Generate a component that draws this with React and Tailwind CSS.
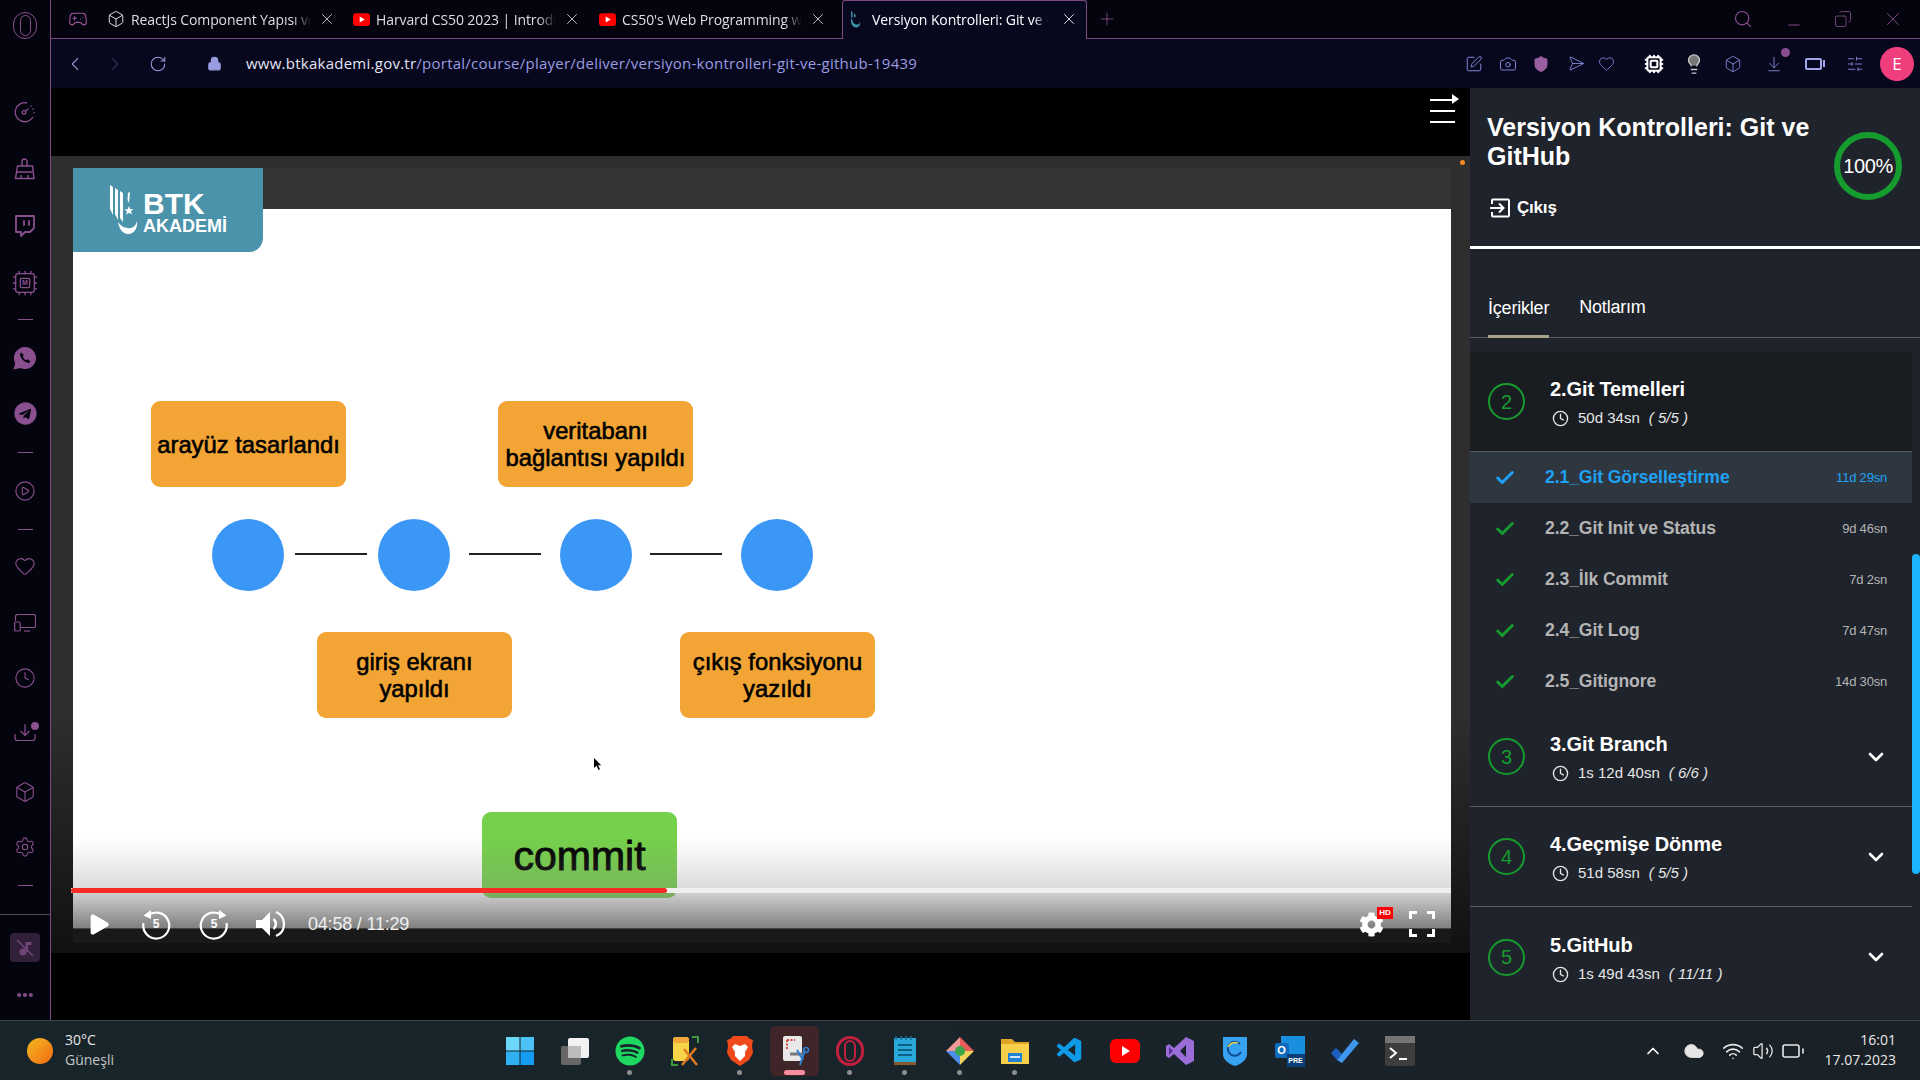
import { ChevronLeft, ChevronRight, RotateCw, Lock, X, Plus, Search, Minus, Copy, Camera, Send, Heart, Box, ArrowDownToLine, SlidersHorizontal, Lightbulb, Gamepad2, Twitch, CirclePlay, Clock, Settings, Check, ChevronDown, ChevronUp, Volume2, Wifi, Cloud, Battery, Play, Cpu, Shield, SquarePen, Ellipsis } from 'lucide-react';
import { FaTelegram, FaSpotify, FaCog } from 'react-icons/fa';
import { VscVscode } from 'react-icons/vsc';

const tabs = [
  { title: 'ReactJs Component Yapısı ve Kullanımı', icon: 'box' },
  { title: 'Harvard CS50 2023 | Introduction', icon: 'yt' },
  { title: "CS50's Web Programming with Python", icon: 'yt' },
];

const lessons = [
  { name: '2.1_Git Görselleştirme', time: '11d 29sn', active: true },
  { name: '2.2_Git Init ve Status', time: '9d 46sn' },
  { name: '2.3_İlk Commit', time: '7d 2sn' },
  { name: '2.4_Git Log', time: '7d 47sn' },
  { name: '2.5_Gitignore', time: '14d 30sn' },
];

function YtIcon({ size = 17 }) {
  return (
    <svg width={size} height={size} viewBox="0 0 16 16" className="shrink-0">
      <rect x="0" y="2" width="16" height="12" rx="3" fill="#f00" />
      <path d="M6.3 5.2 11 8l-4.7 2.800z" fill="#fff" />
    </svg>
  );
}

function Tab({ title, icon }) {
  return (
    <div className="w-[246px] h-full flex items-center pl-[3px] text-[#dedee2]">
      {icon === 'yt' ? <YtIcon /> : <Box size={18} className="shrink-0" strokeWidth={1.3} />}
      <span className="ml-[6px] w-[180px] overflow-hidden whitespace-nowrap text-[14px] tracking-[-0.1px] [mask-image:linear-gradient(to_right,black_90%,transparent)]">{title}</span>
      <X size={18} strokeWidth={1.1} className="ml-[7px] shrink-0" />
    </div>
  );
}

function RailIcon({ children, h, dot }) {
  return (
    <div className={`relative w-full flex items-center justify-center text-[#8a4f8e] ${h}`}>
      {children}
      {dot && <span className="absolute left-[31px] top-[10px] w-2 h-2 rounded-full bg-[#8a4f8e]"></span>}
    </div>
  );
}

function Rail() {
  const s = 22;
  return (
    <aside className="w-[51px] shrink-0 h-full flex flex-col items-center bg-[#04040f] border-r border-[#7b4a80]">
      <div className="h-[38px] w-full flex items-center justify-center pt-3">
        <div className="w-[24px] h-[27px] rounded-full border-[1.5px] border-[#8a4f8e] flex items-center justify-center">
          <div className="w-[11px] h-[21px] rounded-full border border-[#8a4f8e]"></div>
        </div>
      </div>
      <div className="h-[46px]"></div>
      <RailIcon h="h-[56px]">
        <svg width="22" height="22" viewBox="0 0 22 22" fill="none" stroke="currentColor" strokeWidth="1.3">
          <path d="M19 16A9.500 9.500 0 1 1 13 2" />
          <circle cx="10" cy="11.500" r="1.800" />
          <path d="m11.500 10.200 3-2.600" />
          <path d="M17 5v.1M19 8v.1M20 11.500v.1" strokeLinecap="round" strokeWidth="1.600" />
        </svg>
      </RailIcon>
      <RailIcon h="h-[58px]">
        <svg width="22" height="22" viewBox="0 0 22 22" fill="none" stroke="currentColor" strokeWidth="1.400">
          <path d="M8 8V3.500a2.500 2.500 0 0 1 5 0V8M3.500 8h15l1.500 12.500H1.500z" />
          <path d="M3 14h15.500M7 20.500V17M14 20.500V17" />
        </svg>
      </RailIcon>
      <RailIcon h="h-[56px]"><Twitch size={24} strokeWidth={1.8} /></RailIcon>
      <RailIcon h="h-[58px]">
        <div className="relative flex items-center justify-center">
          <Cpu size={28} strokeWidth={1.1} />
          <span className="absolute text-[7px] font-bold font-['Liberation_Sans',sans-serif]">M</span>
        </div>
      </RailIcon>
      <div className="w-[15px] h-px bg-[#8a4f8e] mt-[7px] shrink-0"></div>
      <RailIcon h="h-[76px]">
        <svg width="24" height="24" viewBox="0 0 24 24">
          <path d="M12 1a11 11 0 0 1 0 22 11 11 0 0 1-4.800-1.100L.500 23.500l1.700-6.300A11 11 0 0 1 12 1z" fill="currentColor" />
          <path d="M8.500 6.500 7 8c-.5 3 4.500 9 9 9l1.500-1.800-3-1.900-1.200 1c-1.500-.5-3-2.300-3.500-3.800l1-1.200z" fill="#04040f" />
        </svg>
      </RailIcon>
      <RailIcon h="h-[34px]"><FaTelegram size={23} /></RailIcon>
      <div className="h-[22px]"></div>
      <div className="w-[15px] h-px bg-[#8a4f8e] shrink-0"></div>
      <RailIcon h="h-[76px]"><CirclePlay size={s} strokeWidth={1.2} /></RailIcon>
      <div className="w-[15px] h-px bg-[#8a4f8e] shrink-0"></div>
      <RailIcon h="h-[72px]"><Heart size={s} strokeWidth={1.2} /></RailIcon>
      <RailIcon h="h-[42px]">
        <svg width="22" height="18" viewBox="0 0 22 18" fill="none" stroke="currentColor" strokeWidth="1.200">
          <path d="M1.500 7V2.500a2 2 0 0 1 2-2H19.500a2 2 0 0 1 2 1.800V12a1.500 1.500 0 0 1-1.500 1.500H7" />
          <rect x="0.700" y="8" width="5.500" height="9" rx="1" />
          <path d="M10 17h6" />
        </svg>
      </RailIcon>
      <RailIcon h="h-[68px]"><Clock size={s} strokeWidth={1.2} /></RailIcon>
      <RailIcon h="h-[38px]" dot>
        <svg width="22" height="22" viewBox="0 0 22 22" fill="none" stroke="currentColor" strokeWidth="1.200">
          <path d="M11 4v11M6.500 11l4.500 4.500 4.500-4.500" />
          <path d="M1 14v4a2.500 2.500 0 0 0 2.500 2.500h15A2.500 2.500 0 0 0 21 18v-4" />
        </svg>
      </RailIcon>
      <RailIcon h="h-[84px]"><Box size={s} strokeWidth={1.2} /></RailIcon>
      <RailIcon h="h-[26px]"><Settings size={s} strokeWidth={1.2} /></RailIcon>
      <div className="h-[25px]"></div>
      <div className="w-[15px] h-px bg-[#8a4f8e] shrink-0"></div>
      <div className="h-[28px]"></div>
      <div className="w-full h-px bg-[#4c4c58] shrink-0"></div>
      <div className="mt-[18px] w-[30px] h-[29px] rounded bg-[#32203a] flex items-center justify-center text-[#6e4576]">
        <svg width="18" height="18" viewBox="0 0 18 18" fill="currentColor">
          <circle cx="7" cy="13" r="3.500" />
          <path d="M9.500 13V3h6v3h-3.500v7z" />
          <path d="M1 1l16 16" stroke="currentColor" strokeWidth="1.600" />
        </svg>
      </div>
      <div className="mt-[23px] text-[#8a4f8e]"><Ellipsis size={20} strokeWidth={3} /></div>
    </aside>
  );
}

function TabBar() {
  return (
    <div className="h-[39px] shrink-0 flex items-stretch bg-[#04040f] border-b border-[#7b4a80] font-['Open_Sans',sans-serif]">
      <div className="w-[53px] flex items-center justify-center text-[#a0599f]"><Gamepad2 size={20} strokeWidth={1.3} /></div>
      <div className="flex h-full">
        {tabs.map((t) => <Tab key={t.title} {...t} />)}
      </div>
      <div className="relative w-[245px] h-[39px] flex items-center pl-[5px] pb-[2px] bg-[#07071e] border-x border-t border-[#7b4a80] rounded-tl-[3px] rounded-tr-[3px] text-white">
        <svg width="14" height="18" viewBox="0 0 14 18" className="shrink-0">
          <path d="M3 1l1.500 1v6L3 7zM6 3.500 7.500 4.500v3L6 7z" fill="#3c93ab" />
          <path d="M4 9c.5 4 3 6 6 5.500a3 3 0 0 0 1.500-4c1.500 3 .5 6.500-3 7C5 17.500 2.500 14 3 9z" fill="#3c93ab" />
        </svg>
        <span className="ml-[10px] w-[176px] overflow-hidden whitespace-nowrap text-[14px] tracking-[-0.1px] [mask-image:linear-gradient(to_right,black_92%,transparent)]">Versiyon Kontrolleri: Git ve GitHub</span>
        <X size={18} strokeWidth={1.1} className="ml-[12px] shrink-0" />
        <span className="absolute left-0 right-0 -bottom-px h-px bg-[#07071e]"></span>
      </div>
      <div className="ml-[10px] flex items-center text-[#8a4f8e]"><Plus size={20} strokeWidth={1} /></div>
      <div className="ml-auto flex items-center text-[#8a4f8e] pr-[16px]">
        <Search size={20} strokeWidth={1.4} />
        <Minus size={18} strokeWidth={1.2} className="ml-[32px] mt-3" />
        <Copy size={18} strokeWidth={1.1} className="ml-[31px] -scale-x-100" />
        <X size={22} strokeWidth={1} className="ml-[30px]" />
      </div>
    </div>
  );
}

function AddressBar() {
  return (
    <div className="h-[49px] shrink-0 flex items-center bg-[#07071e]">
      <ChevronLeft size={22} strokeWidth={1.2} className="ml-[13px] text-[#8e90c8]" />
      <ChevronRight size={22} strokeWidth={1.2} className="ml-[18px] text-[#30305a]" />
      <RotateCw size={18} strokeWidth={1.4} className="ml-[23px] text-[#9a9cd8]" />
      <Lock size={15} strokeWidth={2} fill="#9a9ce0" className="ml-[40px] text-[#9a9ce0]" />
      <div className="ml-[24px] text-[15px] tracking-[0.25px] font-['Open_Sans',sans-serif] text-[#9a9ce0] whitespace-nowrap">
        <span className="text-[#e4e4f4]">www.btkakademi.gov.tr</span>/portal/course/player/deliver/versiyon-kontrolleri-git-ve-github-19439
      </div>
      <div className="ml-auto flex items-center pr-[6px] text-[#8488d8]">
        <SquarePen size={18} strokeWidth={1.3} />
        <Camera size={18} strokeWidth={1.3} className="ml-[16px]" />
        <div className="ml-[15px] text-[#9a5f9e]"><Shield size={18} fill="#9a5f9e" strokeWidth={1.2} /></div>
        <Send size={17} strokeWidth={1.2} className="ml-[15px] rotate-45" />
        <Heart size={17} strokeWidth={1.2} className="ml-[16px]" />
        <Cpu size={20} strokeWidth={2.4} className="ml-[29px] text-white" />
        <Lightbulb size={22} strokeWidth={1.5} fill="#777" className="ml-[19px] text-[#c8c8c8]" />
        <Box size={18} strokeWidth={1.2} className="ml-[19px]" />
        <div className="relative ml-[23px]">
          <ArrowDownToLine size={18} strokeWidth={1.2} />
          <span className="absolute -right-[7px] -top-[7px] w-[9px] h-[9px] rounded-full bg-[#8a4f8e]"></span>
        </div>
        <div className="ml-[22px] w-[20px] h-[12px] flex items-center">
          <div className="w-[17px] h-[12px] rounded-[2px] border-2 border-[#a0a4ea]"></div>
          <div className="ml-px w-[2px] h-[7px] bg-[#a0a4ea]"></div>
        </div>
        <SlidersHorizontal size={18} strokeWidth={1.2} className="ml-[21px]" />
        <div className="ml-[16px] w-[34px] h-[34px] rounded-full bg-[#ef3e7c] text-white text-[17px] font-['Open_Sans',sans-serif] flex items-center justify-center">E</div>
      </div>
    </div>
  );
}

function NoteBox({ className, children }) {
  return (
    <div className={`absolute w-[195px] h-[86px] rounded-[9px] bg-[#f2a535] flex items-center justify-center text-center text-black text-[23.8px] leading-[27px] font-['Liberation_Sans',sans-serif] [-webkit-text-stroke:0.6px_black] ${className}`}>
      {children}
    </div>
  );
}

function Slide() {
  const dots = ['left-[139px]', 'left-[305px]', 'left-[487px]', 'left-[668px]'];
  const lines = ['left-[222px]', 'left-[396px]', 'left-[577px]'];
  return (
    <div className="relative flex-1 bg-white">
      <NoteBox className="left-[78px] top-[192px]">arayüz tasarlandı</NoteBox>
      <NoteBox className="left-[425px] top-[192px]">veritabanı<br />bağlantısı yapıldı</NoteBox>
      <NoteBox className="left-[244px] top-[423px]">giriş ekranı<br />yapıldı</NoteBox>
      <NoteBox className="left-[607px] top-[423px]">çıkış fonksiyonu<br />yazıldı</NoteBox>
      {dots.map((d) => <div key={d} className={`absolute top-[310px] w-[72px] h-[72px] rounded-full bg-[#3b97f5] ${d}`}></div>)}
      {lines.map((l) => <div key={l} className={`absolute top-[344px] w-[72px] h-[2px] bg-[#222] ${l}`}></div>)}
      <svg width="10" height="14" viewBox="0 0 10 14" className="absolute left-[520px] top-[548px]">
        <path d="M1 1v10l2.500-2.200L5.500 13l1.500-.7-2-4h3.200z" fill="#000" />
      </svg>
      <div className="absolute left-[409px] top-[603px] w-[195px] h-[86px] pt-[4px] rounded-[9px] bg-[#75d04b] flex items-center justify-center text-black text-[41px] font-['Liberation_Sans',sans-serif] [-webkit-text-stroke:0.9px_black]">commit</div>
    </div>
  );
}

function Replay({ forward }) {
  return (
    <div className="relative w-[32px] h-[32px] flex items-center justify-center text-white">
      <svg width="32" height="32" viewBox="0 0 32 32" fill="none" stroke="white" strokeWidth="2.200" className={forward ? '-scale-x-100' : ''}>
        <path d="M8 7.500A13 13 0 1 1 3.500 15" />
        <path d="M11 2v9L3.500 7.500z" fill="white" stroke="none" />
      </svg>
      <span className="absolute text-[12px] font-bold font-['Liberation_Sans',sans-serif]">5</span>
    </div>
  );
}

function Controls() {
  return (
    <div className="absolute left-0 right-0 bottom-0 pointer-events-none">
      <div className="h-[90px] bg-[linear-gradient(to_bottom,rgba(128,128,128,0),rgba(128,128,128,0.28)_55%,#808080)]"></div>
      <div className="h-[15px] border-t border-[#444] bg-[#191919]"></div>
      <div className="absolute -left-[2px] right-0 top-[50px] h-[5px] bg-[#eeeeee]">
        <div className="h-full w-[596px] rounded-full bg-[#f52c26]"></div>
      </div>
      <div className="absolute left-0 right-0 top-[68px] h-[36px] flex items-center">
        <Play size={27} fill="white" strokeWidth={0} className="ml-[12px]" />
        <div className="ml-[28px]"><Replay /></div>
        <div className="ml-[26px]"><Replay forward /></div>
        <svg width="30" height="30" viewBox="0 0 30 30" fill="none" stroke="white" className="ml-[25px]">
          <path d="M1 11h6l8-8v24l-8-8H1z" fill="white" stroke="none" />
          <path d="M18.500 10a6.500 6.500 0 0 1 0 10" strokeWidth="2.500" />
          <path d="M21 3a13 13 0 0 1 0 24" strokeWidth="2.200" />
        </svg>
        <span className="ml-[23px] text-[18px] text-[#f0f0f0] font-['Liberation_Sans',sans-serif] tracking-[-0.2px]">04:58 / 11:29</span>
        <div className="relative ml-auto">
          <FaCog size={25} className="text-white" />
          <span className="absolute left-[18px] -top-[5px] w-[16px] h-[12px] bg-[#f00] text-white text-[8px] leading-[12px] text-center font-bold font-['Liberation_Sans',sans-serif]">HD</span>
        </div>
        <svg width="26" height="26" viewBox="0 0 26 26" fill="none" stroke="white" strokeWidth="3" className="ml-[25px] mr-[16px]">
          <path d="M1.500 8V1.500H8M18 1.500h6.500V8M24.500 18v6.500H18M8 24.500H1.500V18" />
        </svg>
      </div>
    </div>
  );
}

function BtkLogo() {
  return (
    <div className="absolute left-0 top-0 w-[190px] h-[84px] pl-[37px] bg-[#4b93ab] rounded-br-[14px] flex items-center text-white font-['Liberation_Sans',sans-serif]">
      <svg width="28" height="50" viewBox="0 0 28 50" className="shrink-0">
        <path d="M0 0l3 2v28L0 24zM5 3l3 2v30l-3-6zM10 6l3 2v29l-3-4zM18 8l2-1-1 11-1.500-3z" fill="#fff" />
        <path d="M8 37c1 7 5 12 10 12 6 0 10-6 9-13-1 5-5 8-9 7-4 0-8-3-10-6z" fill="#fff" />
        <path d="m19 21 1.200 3.200 3.300-.2-2.500 2.200 1 3.300-3-1.800-2.700 2 .7-3.300-2.700-2 3.400-.1z" fill="#fff" />
      </svg>
      <div className="ml-[5px] mt-[7px] flex flex-col font-bold">
        <span className="text-[30px] leading-[24px]">BTK</span>
        <span className="text-[18px] leading-[20px]">AKADEMİ</span>
      </div>
    </div>
  );
}

function Player() {
  return (
    <div className="flex-1 min-w-0 flex flex-col bg-black">
      <div className="h-[68px] shrink-0 flex items-center justify-end pr-[15px]">
        <div className="relative w-[25px] flex flex-col gap-[9px] mb-[22px]">
          <div className="h-[2px] w-[22px] bg-white"></div>
          <div className="h-[2px] bg-white"></div>
          <div className="h-[2px] bg-white"></div>
          <span className="absolute -right-[4px] -top-[5px] w-0 h-0 border-y-[5px] border-y-transparent border-l-[7px] border-l-white"></span>
        </div>
      </div>
      <div className="relative h-[797px] shrink-0 pt-[12px] pl-[22px] pr-[19px] pb-[10px] bg-[linear-gradient(to_bottom,#2e2e2e_0%,#2e2e2e_70%,#111_100%)]">
        <span className="absolute right-[5px] top-[4px] w-[5px] h-[5px] rounded-full bg-[#f58a25]"></span>
        <div className="relative h-full flex flex-col">
          <div className="h-[41px] shrink-0 bg-[#343434]"></div>
          <Slide />
          <BtkLogo />
          <Controls />
        </div>
      </div>
      <div className="flex-1 bg-black"></div>
    </div>
  );
}

function ClockLine({ text, count }) {
  return (
    <div className="flex items-center text-[15px] text-[#e6e6e6] mt-[6px] ml-[2px]">
      <Clock size={17} strokeWidth={1.9} className="shrink-0" />
      <span className="ml-[9px]">{text}</span>
      <span className="ml-[9px] italic">( {count} )</span>
    </div>
  );
}

function NumberRing({ n }) {
  return (
    <div className="w-[37px] h-[37px] shrink-0 rounded-full border-[2.500px] border-[#169c2e] text-[#169c2e] text-[20px] flex items-center justify-center">{n}</div>
  );
}

function Section({ n, title, time, count, open, border }) {
  return (
    <div className={`flex items-center pl-[18px] pr-[24px] ${open ? 'h-[99px] bg-[#191c21]' : 'h-[100px]'} ${border ? 'border-b border-[#5a5d60]' : ''}`}>
      <NumberRing n={n} />
      <div className="ml-[25px] mt-[4px] flex-1 min-w-0">
        <div className="text-[20px] leading-[24px] font-bold text-white tracking-[-0.1px]">{title}</div>
        <ClockLine text={time} count={count} />
      </div>
      {!open && <ChevronDown size={24} strokeWidth={2.6} className="text-white" />}
    </div>
  );
}

function Lesson({ name, time, active }) {
  return (
    <div className={`flex items-center pl-[24px] pr-[25px] ${active ? 'h-[52px] bg-[#2e3740] text-[#1ea2f5] border-t border-[#5a5d60]' : 'h-[51px] text-[#b4b4b4]'}`}>
      <Check size={22} strokeWidth={3.2} className={active ? 'text-[#1ea2f5]' : 'text-[#169c2e]'} />
      <span className="ml-[29px] text-[17.6px] font-bold tracking-[-0.1px]">{name}</span>
      <span className="ml-auto text-[13px] tracking-[-0.2px]">{time}</span>
    </div>
  );
}

function CoursePanel() {
  return (
    <aside className="w-[450px] shrink-0 h-full bg-[#1f232b] text-white font-['Liberation_Sans',sans-serif] flex flex-col">
      <div className="h-[161px] shrink-0 flex border-b-[3px] border-white pl-[17px] pr-[18px] pt-[25px]">
        <div className="flex-1 min-w-0">
          <h1 className="text-[25px] leading-[29px] font-bold">Versiyon Kontrolleri: Git ve GitHub</h1>
          <div className="mt-[24px] flex items-center">
            <svg width="20" height="20" viewBox="0 0 20 20" fill="none" stroke="white" strokeWidth="2" className="ml-[3px]">
              <path d="M2 6V2.500a1 1 0 0 1 1-1h15a1 1 0 0 1 1 1v15a1 1 0 0 1-1 1H3a1 1 0 0 1-1-1V14" />
              <path d="M0 10h13M9 5.500l4.500 4.500L9 14.500" />
            </svg>
            <span className="ml-[7px] text-[17px] font-bold tracking-[-0.2px]">Çıkış</span>
          </div>
        </div>
        <div className="w-[68px] h-[68px] mt-[19px] ml-[10px] shrink-0 rounded-full border-[6px] border-[#169c2e] flex items-center justify-center text-[20px] tracking-[-0.4px]">100%</div>
      </div>
      <div className="h-[89px] shrink-0 flex items-end gap-[30px] pl-[18px] border-b border-[#5a5d60] text-[18px] tracking-[-0.2px]">
        <div className="h-[49px] flex items-start pt-[6px] border-b-[3px] border-[#a9a38c] -mb-px">İçerikler</div>
        <div className="h-[49px] flex items-start pt-[6px]">Notlarım</div>
      </div>
      <div className="flex-1 min-h-0 relative pt-[14px] pr-[8px] overflow-hidden">
        <Section n="2" title="2.Git Temelleri" time="50d 34sn" count="5/5" open />
        {lessons.map((l) => <Lesson key={l.name} {...l} />)}
        <Section n="3" title="3.Git Branch" time="1s 12d 40sn" count="6/6" border />
        <Section n="4" title="4.Geçmişe Dönme" time="51d 58sn" count="5/5" border />
        <Section n="5" title="5.GitHub" time="1s 49d 43sn" count="11/11" />
        <span className="absolute right-0 top-[216px] w-[8px] h-[320px] rounded-full bg-[#1bb4ff]"></span>
      </div>
    </aside>
  );
}

// taskbar app icons, roughly in the order they sit on the bar
const apps = [
  { key: 'win', el: (
    <svg width="30" height="30" viewBox="0 0 30 30">
      <rect x="1" y="1" width="13.500" height="13.500" fill="#6ad7fb" /><rect x="15.500" y="1" width="13.500" height="13.500" fill="#4cc2f6" />
      <rect x="1" y="15.500" width="13.500" height="13.500" fill="#2fb0f2" /><rect x="15.500" y="15.500" width="13.500" height="13.500" fill="#159cf0" />
    </svg>
  ) },
  { key: 'copy', el: (
    <svg width="30" height="30" viewBox="0 0 30 30">
      <rect x="1" y="10" width="20" height="19" rx="2" fill="#666" /><rect x="8" y="2" width="21" height="20" rx="2" fill="#f2f2f2" /><rect x="8" y="10" width="13" height="12" fill="#bcbcbc" />
    </svg>
  ) },
  { key: 'spotify', dot: true, el: <FaSpotify size={30} color="#1ed760" /> },
  { key: 'tools', el: (
    <svg width="30" height="32" viewBox="0 0 30 32" fill="none">
      <rect x="3" y="2" width="16" height="24" rx="3" fill="#f6d548" /><rect x="3" y="2" width="16" height="6" rx="3" fill="#f2a93b" />
      <path d="M12 30 26 13M27 30 14 14" stroke="#e07a1f" strokeWidth="2.500" />
      <path d="M22 2h6v6M2 24v6h6" stroke="#3c9a3c" strokeWidth="2" />
    </svg>
  ) },
  { key: 'brave', dot: true, el: (
    <svg width="28" height="32" viewBox="0 0 28 32">
      <path d="M7 1h14l3 3 3 1-1 6 1 7-4 7-9 6-9-6-4-7 1-7-1-6 3-1z" fill="#f04a1b" />
      <path d="M9 9l5 2 5-2 3 3-3 5v4l-5 5-5-5v-4l-3-5z" fill="#fff" />
    </svg>
  ) },
  { key: 'snip', active: true, el: (
    <svg width="30" height="32" viewBox="0 0 30 32" fill="none">
      <rect x="3" y="1" width="19" height="25" rx="2" fill="#e8e8e8" />
      <path d="M7 5h8M7 5v10" stroke="#d24a3a" strokeWidth="2" strokeDasharray="2 1.500" />
      <path d="M10 19h13" stroke="#777" strokeWidth="3" />
      <path d="M25 15 20 30M17 15l6 10" stroke="#2a7fd0" strokeWidth="2" />
      <circle cx="26" cy="15" r="2.500" stroke="#2a7fd0" strokeWidth="1.600" />
    </svg>
  ) },
  { key: 'opera', dot: true, el: (
    <div className="w-[28px] h-[30px] rounded-full border-[3px] border-[#c21f3f] flex items-center justify-center"><div className="w-[12px] h-[22px] rounded-full border-2 border-[#c21f3f]"></div></div>
  ) },
  { key: 'notes', dot: true, el: (
    <svg width="24" height="30" viewBox="0 0 24 30">
      <rect x="1" y="2" width="22" height="24" fill="#29a9d9" /><rect x="1" y="26" width="22" height="3" fill="#8a5a2f" />
      <path d="M5 9h14M5 14h14M5 19h14" stroke="#0d5f85" strokeWidth="2" /><path d="M3 0v4M8 0v4M13 0v4M18 0v4" stroke="#156e96" strokeWidth="1.500" />
    </svg>
  ) },
  { key: 'kite', dot: true, el: (
    <svg width="30" height="30" viewBox="0 0 30 30">
      <path d="M15 1 29 15 15 15z" fill="#e85c5c" /><path d="M15 1 1 15h14z" fill="#f29a9a" /><path d="M1 15 15 29V15z" fill="#4b8fe8" /><path d="M29 15 15 29V15z" fill="#f2d35c" /><circle cx="15" cy="15" r="5" fill="#3ea64a" />
    </svg>
  ) },
  { key: 'files', dot: true, el: (
    <svg width="30" height="30" viewBox="0 0 30 30">
      <path d="M1 3h11l3 3h14v22H1z" fill="#e0a526" /><rect x="1" y="8" width="28" height="20" fill="#f8cf4a" /><rect x="8" y="17" width="14" height="9" fill="#1f82d6" /><rect x="10" y="20" width="10" height="2" fill="#cfe8fb" />
    </svg>
  ) },
  { key: 'code', el: <VscVscode size={30} color="#0f9ae8" /> },
  { key: 'yt', el: (
    <svg width="30" height="24" viewBox="0 0 30 24"><rect width="30" height="24" rx="6" fill="#f00" /><path d="M12 7v10l8-5z" fill="#fff" /></svg>
  ) },
  { key: 'vs', el: (
    <svg width="30" height="30" viewBox="0 0 30 30">
      <path d="M21 1 29 5v20l-8 4-12-11-5 4-3-2V10l3-2 5 4zM21 9l-6 6 6 6z" fill="#9b6dd7" /><path d="M4 11v8l4-4z" fill="#5a2f9e" />
    </svg>
  ) },
  { key: 'hotspot', el: (
    <svg width="26" height="32" viewBox="0 0 26 32" fill="none">
      <path d="M1 2h24v17c0 6-6 10-12 12C7 29 1 25 1 19z" fill="#37a2f2" />
      <path d="M18 9a7 7 0 1 0 1 8" stroke="#0f4a92" strokeWidth="2" /><path d="M6 12a8 8 0 0 1 10-4" stroke="#e8d04a" strokeWidth="1.500" />
    </svg>
  ) },
  { key: 'outlook', el: (
    <div className="relative w-[30px] h-[32px]">
      <div className="absolute right-0 top-[1px] w-[24px] h-[20px] bg-[#1a8fe0]"></div>
      <div className="absolute left-0 top-[8px] w-[14px] h-[15px] rounded-[2px] bg-[#0f6cbd] text-white text-[11px] font-bold leading-[15px] text-center font-['Liberation_Sans',sans-serif]">O</div>
      <div className="absolute right-0 bottom-0 w-[18px] h-[13px] bg-[#0b3f78] text-white text-[7px] font-bold leading-[13px] text-center font-['Liberation_Sans',sans-serif]">PRE</div>
    </div>
  ) },
  { key: 'todo', el: (
    <svg width="30" height="26" viewBox="0 0 30 26"><path d="M1 15 6 10l6 6-5 6z" fill="#1e5fc4" /><path d="M24 1l5 4L12 25l-5-3z" fill="#3f97ee" /></svg>
  ) },
  { key: 'term', el: (
    <svg width="30" height="30" viewBox="0 0 30 30" fill="none">
      <rect width="30" height="30" rx="2" fill="#3d3d3d" /><rect width="30" height="7" fill="#757575" />
      <path d="m5 12 6 5-6 5" stroke="#fff" strokeWidth="2" /><path d="M14 23h8" stroke="#fff" strokeWidth="2" />
    </svg>
  ) },
];

function Taskbar() {
  return (
    <div className="h-[60px] shrink-0 flex items-center border-t border-[#3c4548] bg-[linear-gradient(to_right,#17252a,#18242a_50%,#1a2126)] text-[#e8e8e8] font-['Open_Sans',sans-serif]">
      <div className="w-[492px] shrink-0 flex items-center pl-[27px]">
        <div className="w-[26px] h-[26px] rounded-full bg-gradient-to-br from-[#f5b81f] to-[#ee6a14]"></div>
        <div className="ml-[12px] pb-[2px] text-[14px] leading-[20px]">
          <div>30°C</div>
          <div className="text-[#c6c6c6]">Güneşli</div>
        </div>
      </div>
      <div className="flex items-center">
        {apps.map((a) => (
          <div key={a.key} className="relative w-[55px] h-[50px] flex items-center justify-center">
            {a.active && <span className="absolute left-[3px] w-[49px] h-[50px] rounded-[5px] bg-[#402528]"></span>}
            <div className="relative">{a.el}</div>
            {a.dot && <span className="absolute bottom-[1px] left-[25px] w-[5px] h-[5px] rounded-full bg-[#8e8e8e]"></span>}
            {a.active && <span className="absolute bottom-[1px] left-[17px] w-[21px] h-[5px] rounded-full bg-[#f58f9f]"></span>}
          </div>
        ))}
      </div>
      <div className="ml-auto flex items-center pr-[24px]">
        <ChevronUp size={20} strokeWidth={2} className="text-white" />
        <Cloud size={22} fill="#e6e6e6" strokeWidth={1} className="ml-[20px] text-[#e6e6e6]" />
        <Wifi size={22} strokeWidth={1.8} className="ml-[17px]" />
        <Volume2 size={22} strokeWidth={1.4} className="ml-[8px]" />
        <Battery size={24} strokeWidth={1.6} className="ml-[7px]" />
        <div className="ml-[20px] pb-[2px] text-right text-[14px] leading-[20px]">
          <div>16:01</div>
          <div>17.07.2023</div>
        </div>
      </div>
    </div>
  );
}

export default function App() {
  return (
    <div className="w-[1920px] h-[1080px] overflow-hidden flex flex-col bg-black">
      <div className="flex-1 min-h-0 flex">
        <Rail />
        <div className="flex-1 min-w-0 flex flex-col">
          <TabBar />
          <AddressBar />
          <div className="flex-1 min-h-0 flex">
            <Player />
            <CoursePanel />
          </div>
        </div>
      </div>
      <Taskbar />
    </div>
  );
}
